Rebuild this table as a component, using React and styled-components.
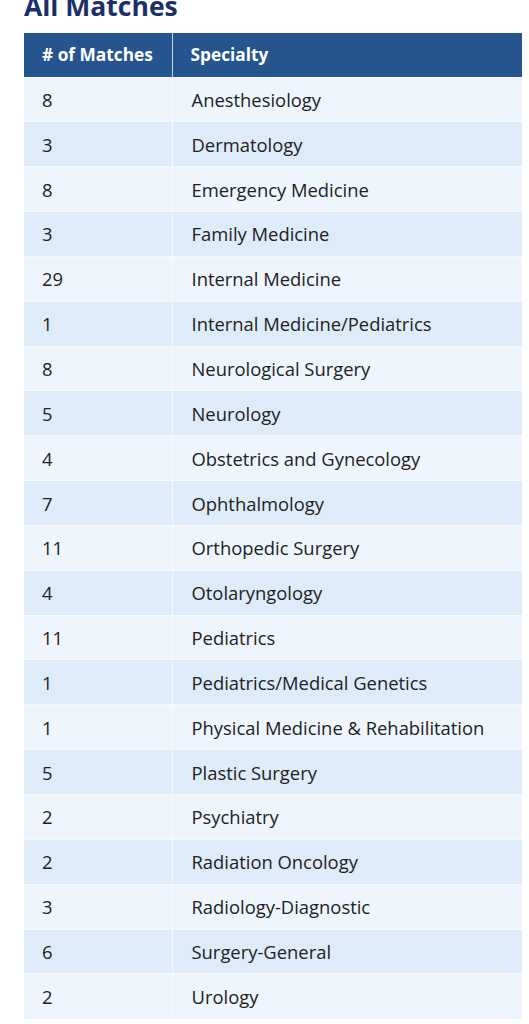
import React from "react";
import styled, { createGlobalStyle } from "styled-components";

const Global = createGlobalStyle`
  html, body { margin: 0; padding: 0; background: #ffffff; }
  body { font-family: "Open Sans", "Noto Sans", sans-serif; }
`;

const Page = styled.div`
  padding: 0 7px 0 24px;
`;

const Title = styled.h2`
  margin: -13px 0 0 0;
  font-size: 26.5px;
  line-height: 38px;
  font-weight: 700;
  color: #1b2f6a;
`;

const Table = styled.table`
  margin-top: 8px;
  width: 498px;
  border-collapse: collapse;
  table-layout: fixed;
`;

const HeadCell = styled.th`
  background: #25548f;
  color: #ffffff;
  font-weight: 700;
  font-size: 17.3px;
  text-align: left;
  height: 44px;
  padding: 0 0 0 18px;
  border-right: ${(p) => (p.$first ? "1px solid #c9d6e8" : "none")};
  box-sizing: border-box;
  width: ${(p) => (p.$first ? "148px" : "auto")};
`;

const Row = styled.tr`
  background: ${(p) => (p.$alt ? "#deebf9" : "#eef5fd")};
  border-top: 1px solid #f6f9fd;
`;

const Cell = styled.td`
  height: 44.85px;
  padding: 0 0 0 ${(p) => (p.$first ? 18 : 19)}px;
  font-size: 18.4px;
  color: #222222;
  box-sizing: border-box;
  border-right: ${(p) => (p.$first ? "1px solid #f6f9fd" : "none")};
`;

const data = [
  [8, "Anesthesiology"],
  [3, "Dermatology"],
  [8, "Emergency Medicine"],
  [3, "Family Medicine"],
  [29, "Internal Medicine"],
  [1, "Internal Medicine/Pediatrics"],
  [8, "Neurological Surgery"],
  [5, "Neurology"],
  [4, "Obstetrics and Gynecology"],
  [7, "Ophthalmology"],
  [11, "Orthopedic Surgery"],
  [4, "Otolaryngology"],
  [11, "Pediatrics"],
  [1, "Pediatrics/Medical Genetics"],
  [1, "Physical Medicine & Rehabilitation"],
  [5, "Plastic Surgery"],
  [2, "Psychiatry"],
  [2, "Radiation Oncology"],
  [3, "Radiology-Diagnostic"],
  [6, "Surgery-General"],
  [2, "Urology"],
];

export default function App() {
  return (
    <Page>
      <Global />
      <Title>All Matches</Title>
      <Table>
        <thead>
          <tr>
            <HeadCell $first># of Matches</HeadCell>
            <HeadCell>Specialty</HeadCell>
          </tr>
        </thead>
        <tbody>
          {data.map(([n, s], i) => (
            <Row key={s} $alt={i % 2 === 1}>
              <Cell $first>{n}</Cell>
              <Cell>{s}</Cell>
            </Row>
          ))}
        </tbody>
      </Table>
    </Page>
  );
}
